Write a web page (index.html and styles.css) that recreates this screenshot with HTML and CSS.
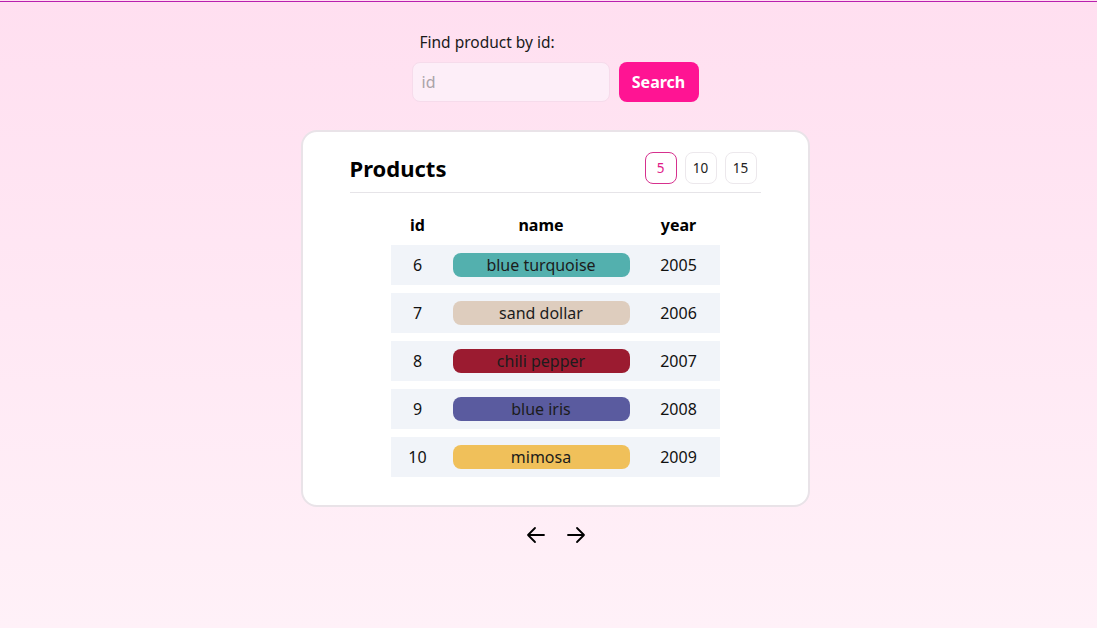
FILE: index.html
```html
<!DOCTYPE html>
<html lang="en">
<head>
<meta charset="utf-8">
<title>Products</title>
<link rel="stylesheet" href="styles.css">
</head>
<body>
<div class="topline"></div>
<main class="page">
  <form class="search">
    <label class="search-label" for="pid">Find product by id:</label>
    <div class="search-row">
      <input id="pid" class="search-input" type="text" placeholder="id">
      <button type="button" class="search-btn">Search</button>
    </div>
  </form>

  <section class="card">
    <header class="card-head">
      <h1 class="card-title">Products</h1>
      <div class="sizes">
        <button class="size active">5</button>
        <button class="size">10</button>
        <button class="size">15</button>
      </div>
    </header>
    <div class="table">
      <div class="trow thead">
        <div class="c-id">id</div>
        <div class="c-name">name</div>
        <div class="c-year">year</div>
      </div>
      <div class="trow">
        <div class="c-id">6</div>
        <div class="c-name"><span class="chip" style="background:#53b0ae">blue turquoise</span></div>
        <div class="c-year">2005</div>
      </div>
      <div class="trow">
        <div class="c-id">7</div>
        <div class="c-name"><span class="chip" style="background:#decdbe">sand dollar</span></div>
        <div class="c-year">2006</div>
      </div>
      <div class="trow">
        <div class="c-id">8</div>
        <div class="c-name"><span class="chip" style="background:#9b1b30">chili pepper</span></div>
        <div class="c-year">2007</div>
      </div>
      <div class="trow">
        <div class="c-id">9</div>
        <div class="c-name"><span class="chip" style="background:#5a5b9f">blue iris</span></div>
        <div class="c-year">2008</div>
      </div>
      <div class="trow">
        <div class="c-id">10</div>
        <div class="c-name"><span class="chip" style="background:#f0c05a">mimosa</span></div>
        <div class="c-year">2009</div>
      </div>
    </div>
  </section>

  <nav class="pager">
    <button class="arrow" aria-label="previous">
      <svg width="20" height="20" viewBox="0 0 20 20" fill="none" stroke="#000" stroke-width="1.8" stroke-linecap="round" stroke-linejoin="round"><path d="M18 10H2M9 3L2 10L9 17"/></svg>
    </button>
    <button class="arrow" aria-label="next">
      <svg width="20" height="20" viewBox="0 0 20 20" fill="none" stroke="#000" stroke-width="1.8" stroke-linecap="round" stroke-linejoin="round"><path d="M2 10H18M11 3L18 10L11 17"/></svg>
    </button>
  </nav>
</main>
</body>
</html>
```

FILE: styles.css
```css
* { box-sizing: border-box; }

html, body {
  margin: 0;
  padding: 0;
  height: 100%;
}

body {
  font-family: "Noto Sans", "Open Sans", sans-serif;
  font-size: 16px;
  color: #111;
  background: linear-gradient(180deg, #ffdff0 0%, #fff1f8 100%);
  padding-top: 1px;
}

.topline {
  height: 1px;
  background: #b81fae;
}

.page {
  display: flex;
  flex-direction: column;
  align-items: center;
  padding-left: 13px;
  padding-top: 29px;
}

.search {
  display: flex;
  flex-direction: column;
  width: 287px;
}

.search-label {
  margin-left: 8px;
  line-height: 22px;
  font-size: 15.5px;
  color: #1a1a1a;
  margin-bottom: 9px;
}

.search-row {
  display: flex;
  gap: 9px;
}

.search-input {
  width: 198px;
  height: 40px;
  border: 1px solid #f6dbeb;
  border-radius: 8px;
  background: #fdeef8;
  padding: 0 9px;
  font-family: inherit;
  font-size: 16px;
  color: #111;
  outline: none;
}

.search-input::placeholder { color: #aaa3a8; }

.search-btn {
  width: 80px;
  height: 40px;
  border: none;
  border-radius: 8px;
  background: #ff1493;
  color: #fff;
  font-family: inherit;
  font-weight: 700;
  font-size: 16px;
  padding: 0;
}

.card {
  margin-top: 28px;
  width: 509px;
  background: #fff;
  border: 2px solid #e9e3e8;
  border-radius: 16px;
  padding: 20px 47px 28px 47px;
}

.card-head {
  display: flex;
  justify-content: space-between;
  align-items: center;
  padding-bottom: 8px;
  border-bottom: 1px solid #e6e4e8;
}

.card-title {
  margin: 0;
  font-size: 22px;
  font-weight: 700;
  color: #000;
  line-height: 32px;
  padding-top: 0;
}

.sizes {
  display: flex;
  gap: 8px;
  margin-right: 4px;
}

.size {
  width: 32px;
  height: 32px;
  padding: 0;
  border: 1px solid #ece8ec;
  border-radius: 8px;
  background: #fff;
  font-family: inherit;
  font-size: 13.5px;
  color: #222;
}

.size.active {
  border-color: #d6308e;
  color: #e01a88;
}

.table {
  width: 329px;
  margin: 12px 0 0 41px;
  display: flex;
  flex-direction: column;
  gap: 8px;
}

.trow {
  display: grid;
  grid-template-columns: 54px 193px 82px;
  align-items: center;
  height: 40px;
  background: #f1f4f9;
  text-align: center;
}

.trow.thead {
  background: transparent;
  font-weight: 700;
  color: #000;
  margin-bottom: -8px;
}

.c-name { padding: 0 8px; }

.chip {
  display: block;
  height: 24px;
  line-height: 24px;
  border-radius: 8px;
  color: #1c1c1c;
}

.pager {
  margin-top: 16px;
  margin-left: 2px;
  display: flex;
  gap: 20px;
}

.arrow {
  width: 20px;
  height: 24px;
  padding: 0;
  border: none;
  background: transparent;
  display: flex;
  align-items: center;
  justify-content: center;
}
```
